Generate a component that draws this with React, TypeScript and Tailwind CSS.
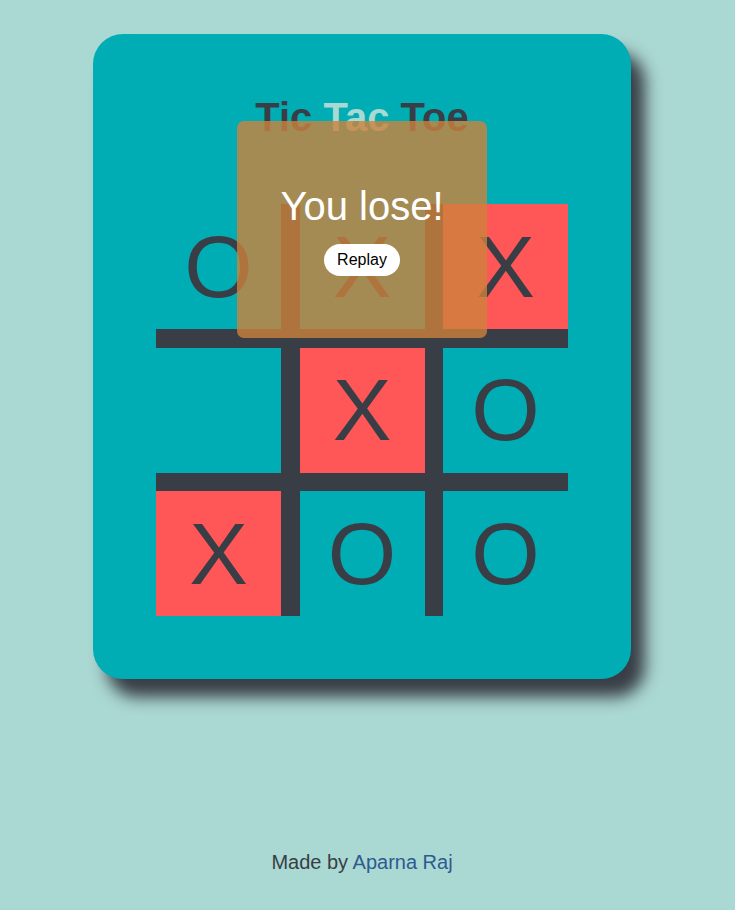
import React from 'react';

const board: { v: string; win?: boolean }[] = [
  { v: 'O' }, { v: 'X' }, { v: 'X', win: true },
  { v: '' }, { v: 'X', win: true }, { v: 'O' },
  { v: 'X', win: true }, { v: 'O' }, { v: 'O' },
];

const App = () => {
  return (
    <main className="min-h-screen bg-[#aad8d3] font-['Liberation_Sans',Arial,sans-serif]">
      <div className="w-[724px] flex flex-col items-center pt-[34px]">
        {/* game card */}
        <div className="relative w-[538px] rounded-[30px] bg-[#00adb5] pt-[60px] pb-[63px] px-[63px] shadow-[14px_18px_16px_#393e46]">
          <h1 className="text-center text-[40px] leading-[46px] font-bold text-[#393e46]">
            Tic <span className="text-[#aad8d3]">Tac</span> Toe
          </h1>

          <div className="mt-[64px] grid grid-cols-[125px_125px_125px] grid-rows-[125px_125px_125px] gap-x-[18.5px] gap-y-[18.5px] w-[412px] bg-[#393e46]">
            {board.map((c, i) => (
              <div
                key={i}
                className={
                  'flex items-center justify-center text-[88px] leading-none text-[#393e46] ' +
                  (c.win ? 'bg-[#ff5757]' : 'bg-[#00adb5]')
                }
              >
                {c.v}
              </div>
            ))}
          </div>

          {/* result popup */}
          <div className="absolute left-[144px] top-[87px] w-[250px] h-[217px] rounded-[7px] bg-[rgba(205,130,60,0.8)] flex flex-col items-center justify-center">
            <p className="text-white text-[40px] leading-[46px]">You lose!</p>
            <button className="mt-[15px] bg-white text-black text-[16px] leading-[18px] px-[13px] py-[7px] rounded-full">
              Replay
            </button>
          </div>
        </div>

        <p className="mt-[172px] text-[20px] leading-[23px] text-[#393e46]">
          Made by <a href="#" className="text-[#2f5a8f]">Aparna Raj</a>
        </p>
      </div>
    </main>
  );
};

export default App;
